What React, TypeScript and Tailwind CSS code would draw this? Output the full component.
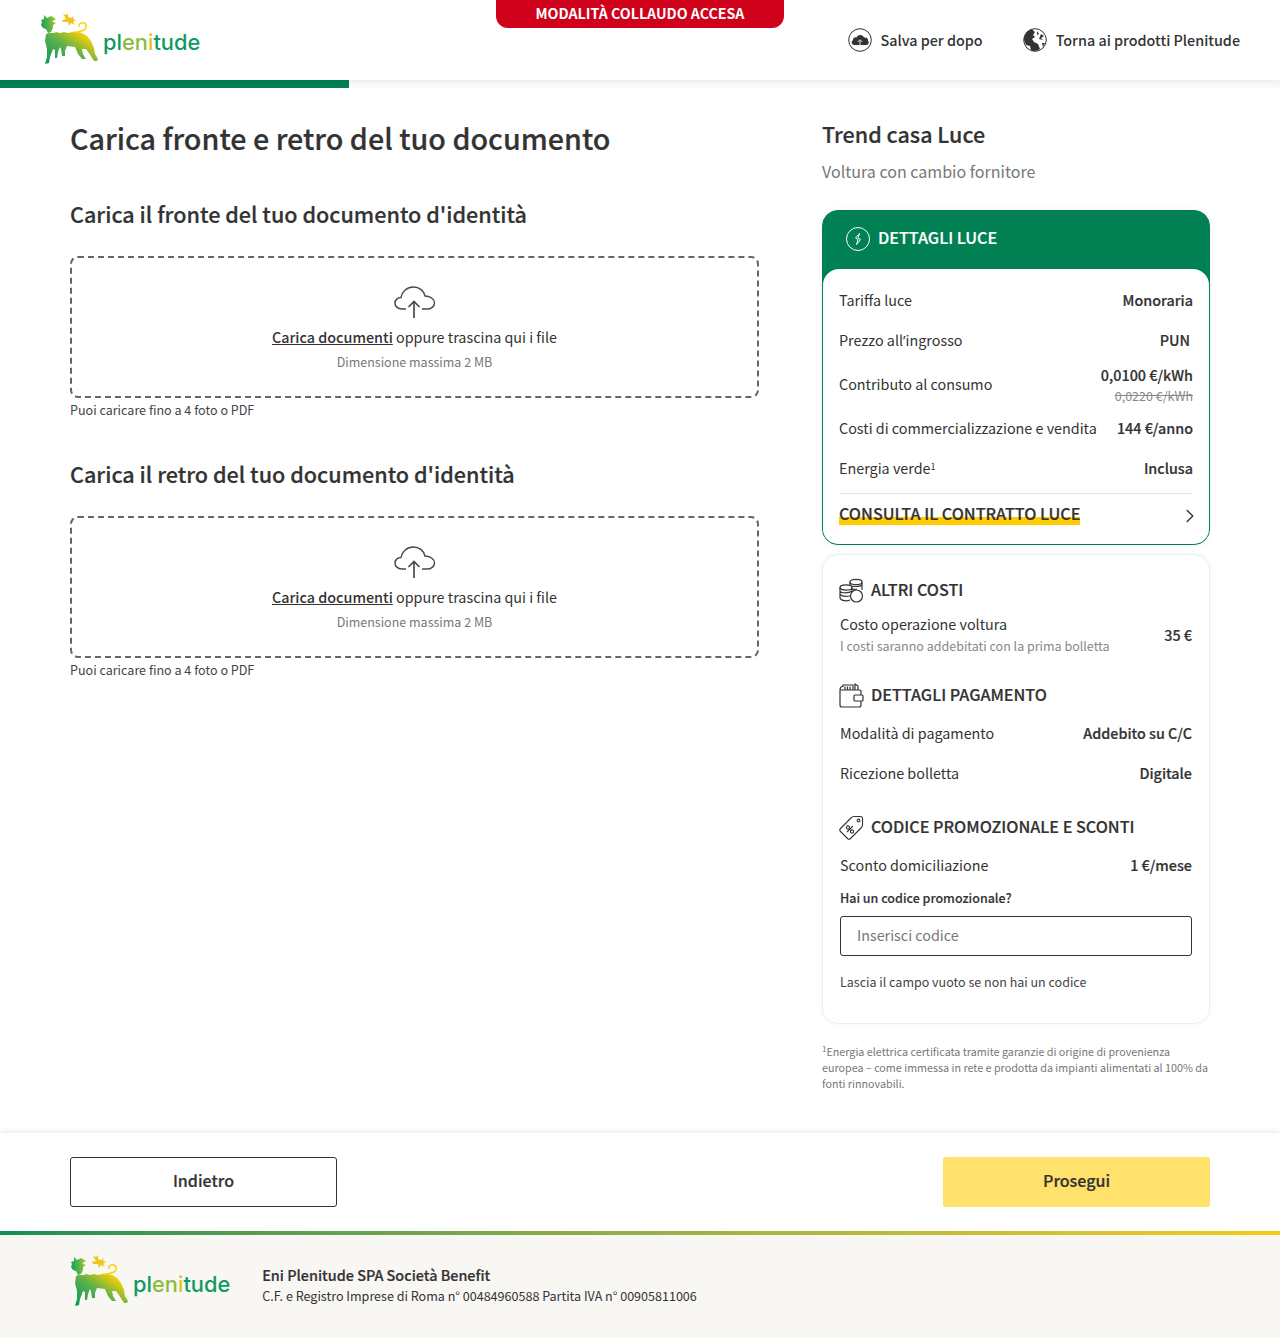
import { useId } from 'react';
import { ChevronRight } from 'lucide-react';

const font = '[font-family:"Noto_Sans_CJK_SC","Noto_Sans",sans-serif]';

function Logo() {
  const id = useId().replace(/:/g, '');
  return (
    <div className="flex items-start">
      <svg width="60" height="54" viewBox="0 0 60 54" className="shrink-0">
        <defs>
          <linearGradient id={id} x1="0" y1="1" x2="0.9" y2="0.2">
            <stop offset="0" stopColor="#009a5c" />
            <stop offset="0.55" stopColor="#5fb04a" />
            <stop offset="1" stopColor="#ffd200" />
          </linearGradient>
          <linearGradient id={`${id}h`} x1="0" y1="0.5" x2="1" y2="0.3">
            <stop offset="0" stopColor="#0ea25a" />
            <stop offset="1" stopColor="#a4c639" />
          </linearGradient>
        </defs>
        <path
          d="M4 2 L7 5 L11 3 L16 6 L12 8.5 L16 10 L13 12 L13 15 L11 19 L8 20 L6 16 L3 15 L1 12 L2 9 L1 7 L4 6 Z"
          fill={`url(#${id}h)`}
        />
        <path
          d="M6 21 L9 20 L14 20 L16 19 L20 20 L24 19 L28 20 L33 19 L38 19 L42 20 L47 23 L51 28 L54 35 L55 41 L58 46 L57 48 L54 48 L49 40 L46 36 L42 36 L43 41 L46 46 L42 46 L38 41 L35 34 L27 33 L25 38 L25 43 L22 43 L21 36 L20 34 L18 39 L17 45 L15 45 L15 37 L13 36 L10 44 L9 50 L5 51 L7 44 L7 36 L5 28 Z"
          fill={`url(#${id})`}
        />
        <path d="M33 19 C38 20 41 18 44 17 C47 15 47 11 44 10 C41 9 38 11 39 14" stroke="#ffd200" strokeWidth="1.5" fill="none" />
        <path d="M23 1 L26 2 L28 0 L28 4 L31 5 L34 3 L33 6 L36 7 L33 9 L35 12 L31 10 L29 13 L28 9 L23 9 L22 7 L26 6 Z" fill="#efc51b" />
      </svg>
      <span className='ml-[3px] mt-[13px] text-[21.8px] leading-8 font-medium [font-family:"Inter",sans-serif]'>
        <span className="text-[#0f9a62]">pl</span>
        <span className="text-[#8cbb3e]">en</span>
        <span className="text-[#e0c520]">i</span>
        <span className="text-[#0f9a62]">tude</span>
      </span>
    </div>
  );
}

function CloudIcon() {
  return (
    <svg width="42" height="34" viewBox="0 0 42 34" fill="none" stroke="#4a4a4a" strokeWidth="1.5" className="ml-[1px]">
      <path d="M12 23 H8 C3.5 23 1 20 1 17 C1 14 3.5 11.5 7 11.5 C8 5.5 13 1 19.5 1 C25.5 1 30 5 31 10 C36 10 40.5 13 40.5 17 C40.5 20.5 37 23 33 23 H28" />
      <path d="M20 32 V15.5 M14.5 21 L20 15.5 L25.5 21" strokeWidth="1.7" />
    </svg>
  );
}

function UploadBox({ title }: { title: string }) {
  return (
    <section>
      <h2 className="text-[21.6px] leading-8 font-medium text-[#333] [-webkit-text-stroke:0.2px]">{title}</h2>
      <div className="mt-[26px] h-[142px] border-2 border-dashed border-[#666] rounded-lg flex flex-col items-center pt-[28px]">
        <CloudIcon />
        <p className="mt-[5px] text-[14.35px] leading-6 text-[#333]">
          <span className="font-medium underline">Carica documenti</span> oppure trascina qui i file
        </p>
        <p className="mt-[3px] text-[12.5px] leading-5 text-[#777]">Dimensione massima 2 MB</p>
      </div>
      <p className="mt-[2px] text-[12.55px] leading-5 text-[#444]">Puoi caricare fino a 4 foto o PDF</p>
    </section>
  );
}

function Row({ label, value, className = 'h-10' }: { label: React.ReactNode; value: React.ReactNode; className?: string }) {
  return (
    <div className={`flex items-center justify-between text-[14.35px] text-[#333] ${className}`}>
      <span className="leading-6">{label}</span>
      <span className="font-medium leading-6 text-right [-webkit-text-stroke:0.2px]">{value}</span>
    </div>
  );
}

function SectionTitle({ icon, children }: { icon: React.ReactNode; children: React.ReactNode }) {
  return (
    <div className="flex items-center gap-[7px] h-7 -ml-[1px]">
      <span className="w-[25px] flex justify-center shrink-0">{icon}</span>
      <h3 className="text-[16.15px] leading-7 font-medium text-[#333] -mt-[2px] [-webkit-text-stroke:0.2px]">{children}</h3>
    </div>
  );
}

function CoinsIcon() {
  return (
    <svg width="25" height="25" viewBox="0 0 25 25" fill="#fff" stroke="#333" strokeWidth="1.2">
      <ellipse cx="17" cy="4" rx="6" ry="2.6" />
      <path d="M11 4 V11 M23 4 V12 M11 7 C12 9 21 9 23 7 M11 10 C13 11.5 16 11.5 18 11" fill="none" />
      <ellipse cx="7" cy="9.5" rx="6" ry="2.6" />
      <path d="M1 9.5 V20 C2 23 8 23.5 11 22 M1 13 C2 15.5 10 15.5 13 13 M1 16.5 C3 18.5 8 18.5 11 18 M13 9.5 V14" fill="none" />
      <circle cx="17.5" cy="18" r="6" />
    </svg>
  );
}

function WalletIcon() {
  return (
    <svg width="25" height="25" viewBox="0 0 25 25" fill="none" stroke="#333" strokeWidth="1.2">
      <path d="M1 7 C1 4 2 3.5 4 3.5 V2 H14 V7 M1 7 V22 C1 23.5 2 24 3 24 H20 C21.5 24 22 23 22 22 V18 M22 12 V8 C22 7 21 7 20 7 H3 C2 7 1 7 1 7" />
      <path d="M6 7 V3.5 M8.5 7 V3.5 M11 7 V3.5 M16 7 V1 L19 3 V7" />
      <rect x="15" y="12" width="9" height="6" rx="1" />
    </svg>
  );
}

function TagIcon() {
  return (
    <svg width="25" height="25" viewBox="0 0 25 25" fill="none" stroke="#333" strokeWidth="1.1">
      <path d="M1.5 13.5 L12 3 C13 2 14 1.5 15 1.5 H21.5 C23 1.5 23.5 2 23.5 3.5 V10 C23.5 11 23 12 22 13 L11.5 23.5 C10.5 24.5 9.5 24.5 8.5 23.5 L1.5 16.5 C0.5 15.5 0.5 14.5 1.5 13.5 Z" />
      <circle cx="19.5" cy="5.5" r="1.4" />
      <path d="M8 17 L14 11" />
      <circle cx="9" cy="12.5" r="1.6" />
      <circle cx="13" cy="16.5" r="1.6" />
    </svg>
  );
}

export default function App() {
  return (
    <div className={`min-h-[1338px] bg-white ${font}`}>
      <header className="relative h-20 shadow-[0_1px_6px_rgba(0,0,0,0.08)] flex items-center justify-between pl-10 pr-10">
        <Logo />
        <div className="absolute top-0 left-1/2 -translate-x-1/2 w-[288px] h-7 bg-[#d0021b] rounded-b-xl flex items-center justify-center text-white text-[14.2px] font-bold pb-[1px]">
          MODALITÀ COLLAUDO ACCESA
        </div>
        <nav className="flex items-center gap-10 text-[14.35px] font-medium text-[#333]">
          <a className="flex items-center gap-2">
            <svg width="24" height="24" viewBox="0 0 24 24">
              <circle cx="12" cy="12" r="11.3" fill="none" stroke="#333" strokeWidth="1" />
              <path d="M6.5 17 C3.5 17 2.8 13.5 5 12 C5 9.5 7.5 9 8.5 9.5 C9.5 6 15 6 16 9.5 C19 9 20.5 11 20 13 C21.5 14.5 20.5 17 18 17 Z" fill="#333" />
              <path d="M12 18 V12 M9.7 14 L12 11.7 L14.3 14" stroke="#ddd" strokeWidth="1" fill="none" />
            </svg>
            Salva per dopo
          </a>
          <a className="flex items-center gap-[9px]">
            <svg width="24" height="24" viewBox="0 0 24 24">
              <circle cx="12" cy="12" r="11.3" fill="#fff" stroke="#333" strokeWidth="1" />
              <path d="M1 12 C1 6 5 2 9 1.5 L12 4 L10 7 L12 9 L9 11 L11 14 L15 16 L17 21 C15 23 11 23.5 8 22.5 L7 18 L3 17 Z" fill="#333" />
              <path d="M14 3 L16 6 L14 7 Z M18 6 L21 8 L18 10 L20 12 L16 11 Z M19 15 L22 15 L20 19 Z" fill="#333" />
            </svg>
            Torna ai prodotti Plenitude
          </a>
        </nav>
      </header>
      <div className="h-2 bg-[#fafafa]">
        <div className="h-2 w-[349px] bg-[#008053]" />
      </div>

      <main className="flex justify-between px-[70px] pt-[30px] pb-[41px]">
        <div className="w-[689px]">
          <h1 className="text-[28.7px] leading-10 font-medium text-[#333] [-webkit-text-stroke:0.2px]">Carica fronte e retro del tuo documento</h1>
          <div className="mt-[40px] flex flex-col gap-[38px]">
            <UploadBox title="Carica il fronte del tuo documento d'identità" />
            <UploadBox title="Carica il retro del tuo documento d'identità" />
          </div>
        </div>

        <aside className="w-[388px]">
          <h2 className="text-[21.5px] leading-8 font-medium text-[#333] [-webkit-text-stroke:0.2px]">Trend casa Luce</h2>
          <p className="mt-[7px] text-[16.05px] leading-7 text-[#777]">Voltura con cambio fornitore</p>

          <div className="mt-[25px] rounded-2xl border border-[#008053] bg-[#008053] overflow-hidden shadow-[0_0_6px_rgba(0,0,0,0.06)]">
            <div className="h-[58px] flex items-center gap-[8px] pl-[23px] pb-[2px] text-white">
              <svg width="24" height="24" viewBox="0 0 24 24" fill="none" stroke="#fff" strokeWidth="1">
                <circle cx="12" cy="12" r="11.5" />
                <path d="M13.5 6.5 L9.5 11 L12 12.5 L10.5 17.5 L14.5 12.5 L12 11 Z" />
              </svg>
              <h3 className="text-[16.15px] leading-7 font-medium -mt-[5px] [-webkit-text-stroke:0.2px]">DETTAGLI LUCE</h3>
            </div>
            <div className="bg-white rounded-t-2xl px-4 pt-[11px] pb-[19px]">
              <Row label="Tariffa luce" value="Monoraria" />
              <Row
                label={
                  <>
                    Prezzo all<span className='[font-family:"Noto_Sans",sans-serif]'>’</span>ingrosso
                  </>
                }
                value={<span className="pr-[3px]">PUN</span>}
              />
              <div className="h-12 flex items-center justify-between text-[14.35px] text-[#333]">
                <span className="leading-6">Contributo al consumo</span>
                <div className="text-right pt-[2px]">
                  <p className="font-medium leading-[22px] [-webkit-text-stroke:0.2px]">0,0100 €/kWh</p>
                  <p className="text-[12.5px] leading-[20px] text-[#888] line-through">0,0220 €/kWh</p>
                </div>
              </div>
              <Row label="Costi di commercializzazione e vendita" value="144 €/anno" />
              <Row
                label={
                  <>
                    Energia verde<sup className="text-[9px] leading-none">1</sup>
                  </>
                }
                value="Inclusa"
              />
              <div className="mt-[5px] border-t border-[#e4e4e4] pt-[8px] flex items-center justify-between">
                <span className="text-[16.15px] leading-[23px] font-medium text-[#333] bg-[linear-gradient(transparent_15px,#ffcd00_15px)] [-webkit-text-stroke:0.2px]">
                  CONSULTA IL CONTRATTO LUCE
                </span>
                <ChevronRight size={22} className="text-[#333] -mr-[8px] mt-[2px] -mb-[2px]" strokeWidth={1.5} />
              </div>
            </div>
          </div>

          <div className="mt-[9px] rounded-2xl border border-[#eee] shadow-[0_0_5px_rgba(0,0,0,0.05)] px-[17px] pt-[21px] pb-[32px] h-[470px]">
            <SectionTitle icon={<CoinsIcon />}>ALTRI COSTI</SectionTitle>
            <div className="mt-[8px] flex items-center justify-between text-[#333]">
              <div>
                <p className="text-[14.35px] leading-6">Costo operazione voltura</p>
                <p className="text-[12.5px] leading-5 text-[#888]">I costi saranno addebitati con la prima bolletta</p>
              </div>
              <span className="mt-[1px] text-[14.35px] leading-6 font-medium [-webkit-text-stroke:0.2px]">35 €</span>
            </div>

            <div className="mt-[25px]">
              <SectionTitle icon={<WalletIcon />}>DETTAGLI PAGAMENTO</SectionTitle>
            </div>
            <div className="mt-[4px]">
              <Row label="Modalità di pagamento" value="Addebito su C/C" />
              <Row label="Ricezione bolletta" value="Digitale" />
            </div>

            <div className="mt-[20px]">
              <SectionTitle icon={<TagIcon />}>CODICE PROMOZIONALE E SCONTI</SectionTitle>
            </div>
            <Row label="Sconto domiciliazione" value="1 €/mese" className="h-10 mt-[4px]" />
            <p className="mt-[3px] text-[12.5px] leading-5 font-medium text-[#333] [-webkit-text-stroke:0.15px]">Hai un codice promozionale?</p>
            <input
              readOnly
              placeholder="Inserisci codice"
              className="mt-[8px] w-full h-10 border border-[#333] rounded-[3px] px-4 pb-[3px] text-[14.35px] text-[#333] placeholder:text-[#777] outline-none"
            />
            <p className="mt-[16px] text-[12.5px] leading-5 text-[#444]">Lascia il campo vuoto se non hai un codice</p>
          </div>

          <p className="mt-[20px] text-[10.75px] leading-4 text-[#777]">
            <sup className="text-[8px] leading-none">1</sup>Energia elettrica certificata tramite garanzie di origine di provenienza europea – come immessa in rete e prodotta da impianti alimentati al 100% da fonti rinnovabili.
          </p>
        </aside>
      </main>

      <div className="h-[98px] shadow-[0_-1px_6px_rgba(0,0,0,0.1)] flex items-center justify-between px-[70px]">
        <button className="w-[267px] h-[50px] border border-[#333] rounded-[3px] pb-[3px] text-[16.05px] font-medium text-[#333] [-webkit-text-stroke:0.2px]">Indietro</button>
        <button className="w-[267px] h-[50px] bg-[#ffe16c] rounded-[3px] pb-[3px] text-[16.05px] font-medium text-[#333] [-webkit-text-stroke:0.2px]">Prosegui</button>
      </div>

      <div className="h-1 bg-gradient-to-r from-[#0c8f55] to-[#f3cc10]" />
      <footer className="h-[103px] bg-[#f8f7f4] flex items-start px-[70px] pt-[20px]">
        <Logo />
        <div className="ml-[32px] mt-[8px] text-[#333]">
          <p className="text-[14.4px] leading-6 font-medium [-webkit-text-stroke:0.2px]">Eni Plenitude SPA Società Benefit</p>
          <p className="text-[12.55px] leading-5 -mt-[1px]">C.F. e Registro Imprese di Roma n° 00484960588 Partita IVA n° 00905811006</p>
        </div>
      </footer>
    </div>
  );
}
